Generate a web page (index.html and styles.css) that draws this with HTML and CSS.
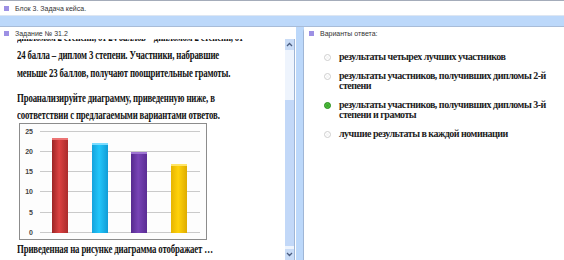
FILE: index.html
```
<!DOCTYPE html>
<html lang="ru">
<head>
    <meta charset="UTF-8" />
    <title>Блок 3. Задача кейса.</title>
    <link rel="stylesheet" href="styles.css">
</head>
<body>
<div class="topbar">
    <span class="mark"></span>Блок 3. Задача кейса.
</div>
<div class="band"></div>
<div class="panes">
    <div class="pane left">
        <div class="pane-title"><span class="mark"></span>Задание № 31.2</div>
        <div class="scroll-wrap">
            <div class="task">
                <p class="cut">дипломом 2 степени, от 24 баллов – дипломом 2 степени, от</p>
                <p>24 балла – диплом 3 степени. Участники, набравшие<br>
                    меньше 23 баллов, получают поощрительные грамоты.</p>
                <p class="gap">Проанализируйте диаграмму, приведенную ниже, в<br>
                    соответствии с предлагаемыми вариантами ответов.</p>
                <div class="chart">
                    <svg width="188" height="117" viewBox="0 0 188 117">
                        <defs>
                            <linearGradient id="gr" x1="0" y1="0" x2="1" y2="0">
                                <stop offset="0" stop-color="#9c2424"/>
                                <stop offset="0.45" stop-color="#dc4242"/>
                                <stop offset="1" stop-color="#aa2c2c"/>
                            </linearGradient>
                            <linearGradient id="gb" x1="0" y1="0" x2="1" y2="0">
                                <stop offset="0" stop-color="#14a2dc"/>
                                <stop offset="0.45" stop-color="#22c6fa"/>
                                <stop offset="1" stop-color="#109cd6"/>
                            </linearGradient>
                            <linearGradient id="gp" x1="0" y1="0" x2="1" y2="0">
                                <stop offset="0" stop-color="#552a8e"/>
                                <stop offset="0.45" stop-color="#7844b6"/>
                                <stop offset="1" stop-color="#5a2c94"/>
                            </linearGradient>
                            <linearGradient id="gy" x1="0" y1="0" x2="1" y2="0">
                                <stop offset="0" stop-color="#e6b400"/>
                                <stop offset="0.45" stop-color="#ffd20a"/>
                                <stop offset="1" stop-color="#deac00"/>
                            </linearGradient>
                        </defs>
                        <g stroke="#cacaca" stroke-width="1">
                            <line x1="21" y1="8.5" x2="181" y2="8.5"/>
                            <line x1="21" y1="28.5" x2="181" y2="28.5"/>
                            <line x1="21" y1="48.5" x2="181" y2="48.5"/>
                            <line x1="21" y1="68.5" x2="181" y2="68.5"/>
                            <line x1="21" y1="89.5" x2="181" y2="89.5"/>
                            <line x1="21" y1="109.5" x2="181" y2="109.5"/>
                        </g>
                        <g font-family="Liberation Sans, Arial, sans-serif" font-size="7" fill="#444" text-anchor="end">
                            <text x="14" y="11">25</text>
                            <text x="14" y="31">20</text>
                            <text x="14" y="51">15</text>
                            <text x="14" y="71">10</text>
                            <text x="14" y="92">5</text>
                            <text x="14" y="112">0</text>
                        </g>
                        <rect x="33" y="15" width="16" height="95" fill="url(#gr)"/>
                        <rect x="33" y="15" width="16" height="2" fill="#ec7474"/>
                        <rect x="73" y="20" width="16" height="90" fill="url(#gb)"/>
                        <rect x="73" y="20" width="16" height="2" fill="#7adcff"/>
                        <rect x="112" y="29" width="16" height="81" fill="url(#gp)"/>
                        <rect x="112" y="29" width="16" height="2" fill="#9e74d2"/>
                        <rect x="152" y="41" width="16" height="69" fill="url(#gy)"/>
                        <rect x="152" y="41" width="16" height="2" fill="#ffe466"/>
                    </svg>
                </div>
                <p class="question">Приведенная на рисунке диаграмма отображает …</p>
            </div>
            <div class="scrollbar">
                <span class="arrow">
                    <svg width="7" height="5" viewBox="0 0 7 5"><path d="M1 4 L3.5 1.5 L6 4" fill="none" stroke="#4b5d80" stroke-width="1.3"/></svg>
                </span>
                <span class="track"></span>
                <span class="thumb"></span>
                <span class="arrow">
                    <svg width="7" height="5" viewBox="0 0 7 5"><path d="M1 1 L3.5 3.5 L6 1" fill="none" stroke="#4b5d80" stroke-width="1.3"/></svg>
                </span>
            </div>
        </div>
    </div>
    <div class="pane right">
        <div class="pane-title"><span class="mark"></span>Варианты ответа:</div>
        <ul class="answers">
            <li><span class="radio"></span><span>результаты четырех лучших участников</span></li>
            <li><span class="radio"></span><span>результаты участников, получивших дипломы <span class="nb">2-й</span> степени</span></li>
            <li><span class="radio checked"></span><span>результаты участников, получивших дипломы <span class="nb">3-й</span> степени и грамоты</span></li>
            <li><span class="radio"></span><span>лучшие результаты в каждой номинации</span></li>
        </ul>
    </div>
</div>
</body>
</html>
```

FILE: styles.css
```
body {
    margin: 0;
    padding: 0;
    background-color: #bcd8fa;
    font-family: "Liberation Sans", Arial, sans-serif;
    overflow: hidden;
    height: 260px;
}

.mark {
    display: inline-block;
    width: 5px;
    height: 5px;
    margin-right: 6px;
    background-color: #9d90e4;
    vertical-align: 0;
}

.topbar {
    height: 14px;
    background-color: #fff;
    border-top: 1px solid #a4acba;
    border-bottom: 1px solid #dde6f2;
    padding-left: 4px;
    font-size: 7px;
    line-height: 15px;
    color: #333;
}

.band {
    height: 10px;
    border-bottom: 1px solid #a8bcd8;
}

.panes {
    display: flex;
    height: 233px;
}

.pane {
    background-color: #fff;
}

.pane.left {
    width: 296px;
    display: flex;
    flex-direction: column;
}

.pane.right {
    flex: 1;
    margin-left: 7px;
    border-left: 1px solid #9fb6d6;
    border-top-left-radius: 5px;
}

.pane-title {
    position: relative;
    z-index: 1;
    background-color: #fff;
    font-size: 7px;
    color: #333;
    padding: 3px 0 0 4px;
    height: 9px;
}

.pane.right .pane-title {
    padding: 3px 0 0 5px;
}

.scroll-wrap {
    flex: 1;
    display: flex;
    overflow: hidden;
}

.task {
    flex: 1;
    overflow: hidden;
    padding-left: 17px;
    font-family: "Liberation Serif", "Times New Roman", serif;
    font-weight: bold;
    font-size: 12px;
    line-height: 18px;
    color: #111;
}

.task p {
    margin: 0;
    white-space: nowrap;
    transform: scaleX(0.73);
    transform-origin: 0 0;
    letter-spacing: -0.2px;
}

.task p.cut {
    margin-top: -11px;
}

.task p.gap {
    margin-top: 8px;
    line-height: 17px;
}

.chart {
    width: 188px;
    height: 117px;
    margin: -1px 0 0 2px;
    border: 1px solid #8c8c8c;
    box-sizing: border-box;
    background-color: #fdfdfd;
}

.chart svg {
    display: block;
    margin: -1px;
}

.task p.question {
    margin-top: 1px;
    line-height: 16px;
}

.scrollbar {
    width: 9px;
    margin-right: 1px;
    background-color: #eef4fd;
    border-right: 1px solid #9fb6d6;
    display: flex;
    flex-direction: column;
    align-items: center;
}

.scrollbar .arrow {
    height: 11px;
    width: 9px;
    display: flex;
    align-items: center;
    justify-content: center;
    background-color: #c9dcf7;
}

.scrollbar .track {
    height: 50px;
}

.scrollbar .thumb {
    flex: 1;
    width: 9px;
    margin-bottom: 3px;
    background-color: #c2d8f8;
}

.answers {
    list-style: none;
    margin: 13px 0 0 0;
    padding: 0 0 0 20px;
    font-family: "Liberation Serif", "Times New Roman", serif;
    font-weight: bold;
    font-size: 10px;
    line-height: 10px;
    letter-spacing: -0.5px;
    color: #222;
}

.answers li {
    display: flex;
    align-items: flex-start;
    margin-bottom: 9px;
    max-width: 226px;
}

.answers .nb {
    white-space: nowrap;
}

.radio {
    flex: none;
    width: 5px;
    height: 5px;
    margin: 2px 8px 0 0;
    border: 1px solid #d0d0d0;
    border-radius: 50%;
    background-color: #f6f6f6;
    box-shadow: inset 0 0 0 1px #fff;
}

.radio.checked {
    background-color: #3aa82a;
    border-color: #2e9222;
    box-shadow: inset 0 0 1px 1px #55c044;
}
```
